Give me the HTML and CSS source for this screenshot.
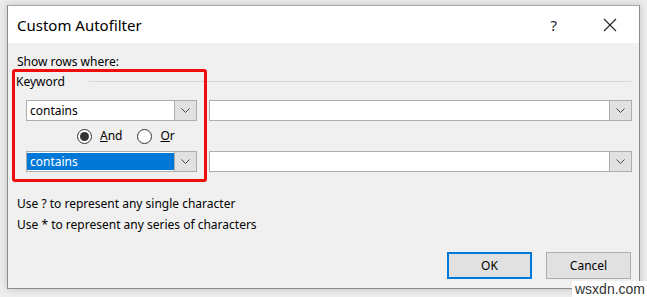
FILE: index.html
```html
<!DOCTYPE html>
<html>
<head>
<meta charset="utf-8">
<link rel="stylesheet" href="styles.css">
</head>
<body>
<div class="dialog">
  <div class="titlebar">
    <span class="title">Custom Autofilter</span>
    <span class="help">?</span>
    <span class="close"><svg width="14" height="14" viewBox="0 0 14 14"><path d="M1 1L13 13M13 1L1 13" stroke="#222" stroke-width="1.1" fill="none"/></svg></span>
  </div>
  <div class="content">
    <div class="show">Show rows where:</div>
    <div class="group-head"><span class="keyword">Keyword</span><div class="rule"></div></div>
    <div class="row">
      <div class="combo small"><span class="value">contains</span><span class="drop"><svg width="9" height="5" viewBox="0 0 9 5"><path d="M0.5 0.5L4.5 4.5L8.5 0.5" stroke="#444" stroke-width="1" fill="none"/></svg></span></div>
      <div class="combo large"><span class="value"></span><span class="drop"><svg width="9" height="5" viewBox="0 0 9 5"><path d="M0.5 0.5L4.5 4.5L8.5 0.5" stroke="#444" stroke-width="1" fill="none"/></svg></span></div>
    </div>
    <div class="radios">
      <span class="radio checked"></span><span class="rlabel"><u>A</u>nd</span>
      <span class="radio"></span><span class="rlabel"><u>O</u>r</span>
    </div>
    <div class="row">
      <div class="combo small"><span class="value selected">contains</span><span class="drop"><svg width="9" height="5" viewBox="0 0 9 5"><path d="M0.5 0.5L4.5 4.5L8.5 0.5" stroke="#444" stroke-width="1" fill="none"/></svg></span></div>
      <div class="combo large"><span class="value"></span><span class="drop"><svg width="9" height="5" viewBox="0 0 9 5"><path d="M0.5 0.5L4.5 4.5L8.5 0.5" stroke="#444" stroke-width="1" fill="none"/></svg></span></div>
    </div>
    <div class="hints">
      <p>Use ? to represent any single character</p>
      <p>Use * to represent any series of characters</p>
    </div>
    <div class="buttons">
      <button class="btn default">OK</button>
      <button class="btn">Cancel</button>
    </div>
  </div>
  <div class="annot"></div>
</div>
<div class="watermark">wsxdn.com</div>
</body>
</html>
```

FILE: styles.css
```css
html, body {
  margin: 0;
  padding: 0;
}
body {
  width: 647px;
  height: 297px;
  background: #ececec;
  font-family: "Noto Sans", "Open Sans", sans-serif;
  font-size: 12px;
  color: #000;
  padding: 5px 7px 0 7px;
  box-sizing: border-box;
  position: relative;
  overflow: hidden;
}
.dialog {
  position: relative;
  width: 633px;
  height: 284px;
  box-sizing: border-box;
  border: 1px solid #8a8a8a;
  border-top-color: #a8a8a8;
  background: #f0f0f0;
  box-shadow: 0 0 7px rgba(0,0,0,0.18);
  display: flex;
  flex-direction: column;
}
.titlebar {
  height: 37px;
  background: #fff;
  display: flex;
  align-items: center;
  padding-left: 9px;
  padding-right: 22px;
}
.title {
  font-size: 15px;
  flex: 1;
  padding-top: 1px;
}
.help {
  font-size: 15px;
  margin-right: 46px;
  color: #222;
}
.close {
  display: flex;
  width: 14px;
  height: 14px;
}
.content {
  padding: 11px 8px 0 9px;
  display: flex;
  flex-direction: column;
}
.show {
  line-height: 16px;
}
.group-head {
  display: flex;
  align-items: center;
  margin-top: 4px;
  line-height: 16px;
  margin-left: -1px;
}
.keyword {
  width: 73px;
}
.rule {
  flex: 1;
  height: 1px;
  background: #d8d8d8;
  margin-top: -2px;
}
.row {
  display: flex;
  gap: 12px;
  margin-top: 10px;
  margin-left: 9px;
  margin-right: -1px;
}
.radios + .row {
  margin-top: 0;
}
.combo {
  height: 21px;
  box-sizing: border-box;
  border: 1px solid #adadad;
  background: #fff;
  display: flex;
  align-items: stretch;
}
.combo.small { width: 171px; }
.combo.large { flex: 1; }
.value {
  flex: 1;
  padding-left: 3px;
  line-height: 19px;
}
.value.selected {
  background: #0078d7;
  color: #fff;
  margin: 1px 0 1px 0;
  line-height: 17px;
  padding-left: 3px;
}
.drop {
  width: 21px;
  background: #e1e1e1;
  border-left: 1px solid #adadad;
  display: flex;
  align-items: center;
  justify-content: center;
  margin: -1px -1px -1px 0;
  border-top: 1px solid #adadad;
  border-bottom: 1px solid #adadad;
  border-right: 1px solid #adadad;
}
.radios {
  height: 30px;
  display: flex;
  align-items: center;
  padding-left: 60px;
}
.radio {
  width: 15px;
  height: 15px;
  box-sizing: border-box;
  border: 1px solid #333;
  border-radius: 50%;
  background: #fff;
  display: flex;
  align-items: center;
  justify-content: center;
}
.radio.checked::after {
  content: "";
  width: 9px;
  height: 9px;
  border-radius: 50%;
  background: #333;
}
.rlabel {
  margin-left: 8px;
  margin-right: 15px;
  line-height: 16px;
}
.hints {
  margin-top: 21px;
}
.hints p {
  margin: 0;
  line-height: 21px;
}
.buttons {
  display: flex;
  justify-content: flex-end;
  gap: 14px;
  margin-top: 17px;
}
.btn {
  width: 85px;
  height: 27px;
  box-sizing: border-box;
  font-family: "Noto Sans", "Open Sans", sans-serif;
  font-size: 12px;
  color: #000;
  background: #e1e1e1;
  border: 1px solid #adadad;
  padding: 0;
}
.btn.default {
  border: 2px solid #0078d7;
}
.annot {
  position: absolute;
  left: 4px;
  top: 63px;
  width: 195px;
  height: 113px;
  box-sizing: border-box;
  border: 3.5px solid #f20d0d;
  border-radius: 3px;
  pointer-events: none;
}
.watermark {
  position: absolute;
  left: 572px;
  top: 281px;
  padding: 0 3px;
  background: #fff;
  font-family: "Liberation Sans", sans-serif;
  font-size: 14px;
  line-height: 16px;
  color: #333;
}
```
